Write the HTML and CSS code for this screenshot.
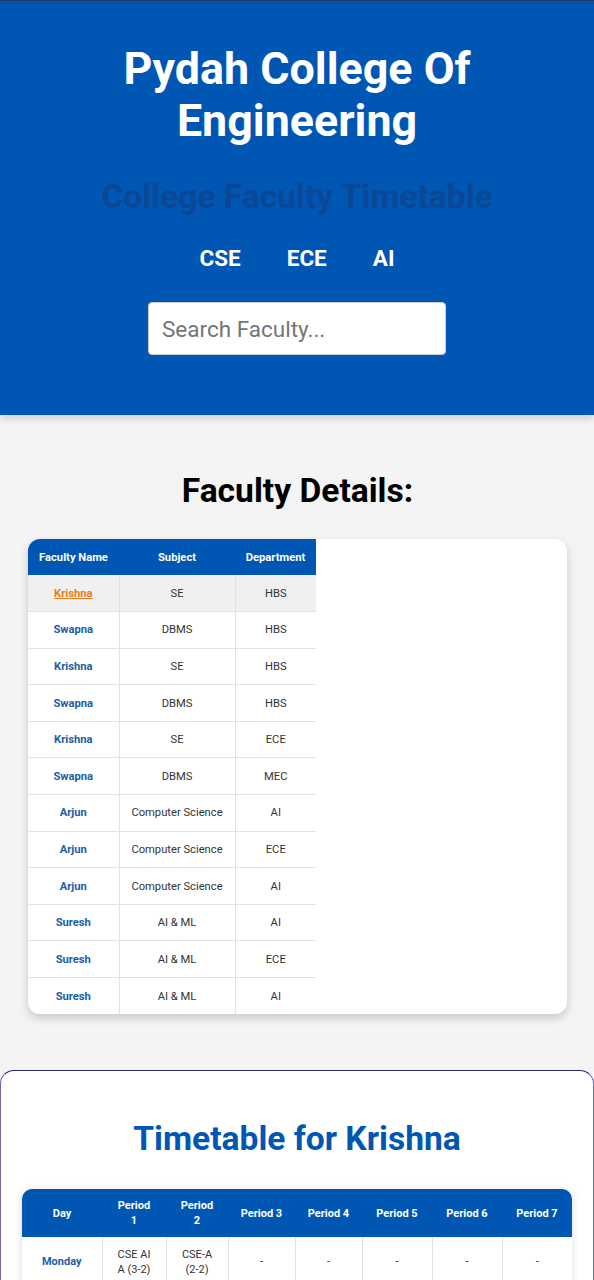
FILE: index.html
```html
<!DOCTYPE html>
<html lang="en">
<head>
<meta charset="utf-8">
<title>Pydah College Of Engineering</title>
<link rel="stylesheet" href="styles.css">
</head>
<body>
<header class="site-header">
  <h1 class="title">Pydah College Of Engineering</h1>
  <h2 class="subtitle">College Faculty Timetable</h2>
  <nav class="nav">
    <a href="#" class="nav-link">CSE</a>
    <a href="#" class="nav-link">ECE</a>
    <a href="#" class="nav-link">AI</a>
  </nav>
  <div class="search">
    <input class="search-input" type="text" placeholder="Search Faculty...">
  </div>
</header>

<main>
  <section class="faculty">
    <h2 class="section-title">Faculty Details:</h2>
    <div class="card">
      <table class="fac-table">
        <colgroup><col class="c-name"><col class="c-subj"><col class="c-dept"></colgroup>
        <thead>
          <tr><th>Faculty Name</th><th>Subject</th><th>Department</th></tr>
        </thead>
        <tbody>
          <tr class="active"><td class="name"><a href="#">Krishna</a></td><td>SE</td><td>HBS</td></tr>
          <tr><td class="name">Swapna</td><td>DBMS</td><td>HBS</td></tr>
          <tr><td class="name">Krishna</td><td>SE</td><td>HBS</td></tr>
          <tr><td class="name">Swapna</td><td>DBMS</td><td>HBS</td></tr>
          <tr><td class="name">Krishna</td><td>SE</td><td>ECE</td></tr>
          <tr><td class="name">Swapna</td><td>DBMS</td><td>MEC</td></tr>
          <tr><td class="name">Arjun</td><td>Computer Science</td><td>AI</td></tr>
          <tr><td class="name">Arjun</td><td>Computer Science</td><td>ECE</td></tr>
          <tr><td class="name">Arjun</td><td>Computer Science</td><td>AI</td></tr>
          <tr><td class="name">Suresh</td><td>AI &amp; ML</td><td>AI</td></tr>
          <tr><td class="name">Suresh</td><td>AI &amp; ML</td><td>ECE</td></tr>
          <tr><td class="name">Suresh</td><td>AI &amp; ML</td><td>AI</td></tr>
        </tbody>
      </table>
    </div>
  </section>

  <section class="timetable">
    <h2 class="tt-title">Timetable for Krishna</h2>
    <div class="tt-wrap">
      <table class="tt-table">
        <colgroup>
          <col class="t-day"><col class="t-p1"><col class="t-p2"><col class="t-p3"><col class="t-p4"><col class="t-p5"><col class="t-p6"><col class="t-p7">
        </colgroup>
        <thead>
          <tr><th>Day</th><th>Period 1</th><th>Period 2</th><th>Period 3</th><th>Period 4</th><th>Period 5</th><th>Period 6</th><th>Period 7</th></tr>
        </thead>
        <tbody>
          <tr><td class="day">Monday</td><td>CSE AI A (3-2)</td><td>CSE-A (2-2)</td><td>-</td><td>-</td><td>-</td><td>-</td><td>-</td></tr>
          <tr><td class="day">Tuesday</td><td>-</td><td>-</td><td>-</td><td>-</td><td>-</td><td>-</td><td>-</td></tr>
        </tbody>
      </table>
    </div>
  </section>
</main>
</body>
</html>
```

FILE: styles.css
```css
* { box-sizing: border-box; }

html, body {
  margin: 0;
  padding: 0;
}

body {
  background: #f4f4f4;
  font-family: Roboto, "Liberation Sans", Arial, sans-serif;
  color: #000;
}

.site-header {
  background: #0056b3;
  border-top: 1px solid #1d3b66;
  padding: 42px 20px 60px;
  text-align: center;
  box-shadow: 0 3px 8px rgba(0, 0, 0, 0.18);
  position: relative;
}

.title {
  margin: 0 auto;
  max-width: 420px;
  color: #fff;
  font-size: 44.8px;
  line-height: 52px;
  font-weight: 700;
}

.subtitle {
  margin: 30px 0 0;
  color: #0a4796;
  font-size: 33.6px;
  line-height: 40px;
  font-weight: 700;
}

.nav {
  display: flex;
  justify-content: center;
  gap: 46px;
  margin-top: 26px;
}

.nav-link {
  color: #fff;
  text-decoration: none;
  font-size: 22.5px;
  font-weight: 700;
  line-height: 30px;
}

.search {
  margin-top: 29px;
  display: flex;
  justify-content: center;
}

.search-input {
  width: 298px;
  height: 53px;
  border: 1px solid #ccc;
  border-radius: 4px;
  padding: 0 13px;
  font-family: Roboto, "Liberation Sans", Arial, sans-serif;
  font-size: 22.5px;
  color: #333;
  background: #fff;
  outline: none;
}

.search-input::placeholder {
  color: #757575;
}

.faculty {
  padding: 56px 27px 0 28px;
}

.section-title {
  margin: 0 0 28px;
  text-align: center;
  font-size: 33.6px;
  line-height: 40px;
  font-weight: 700;
  color: #000;
}

.card {
  background: #fff;
  border-radius: 12px;
  box-shadow: 0 4px 10px rgba(0, 0, 0, 0.18);
  overflow: hidden;
}

.fac-table {
  border-collapse: collapse;
  table-layout: fixed;
  width: 288px;
  font-size: 11.2px;
}

.c-name { width: 91px; }
.c-subj { width: 116px; }
.c-dept { width: 81px; }

.fac-table th {
  background: #0056b3;
  color: #fff;
  font-weight: 700;
  height: 36px;
  padding: 0 4px;
  text-align: center;
}

.fac-table td {
  height: 36.6px;
  padding: 0 4px;
  text-align: center;
  color: #333;
  border-right: 1px solid #e2e2e2;
  border-bottom: 1px solid #e2e2e2;
}

.fac-table td:last-child { border-right: none; }
.fac-table tbody tr:last-child td { border-bottom: none; }

.fac-table td.name {
  color: #1a5ea8;
  font-weight: 700;
}

.fac-table tr.active td {
  background: #f0f0f0;
}

.fac-table tr.active td.name a {
  color: #ec7a1c;
  text-decoration: underline;
}

.timetable {
  margin-top: 56px;
  background: #fff;
  border-top: 1px solid #2a2a7a;
  border-left: 1px solid #6a6ab0;
  border-right: 1px solid #6a6ab0;
  border-radius: 14px 14px 0 0;
  padding: 48px 21px 40px;
}

.tt-title {
  margin: 0 0 30px;
  text-align: center;
  color: #0056b3;
  font-size: 33.6px;
  line-height: 40px;
  font-weight: 700;
}

.tt-wrap {
  border-radius: 10px;
  overflow: hidden;
  box-shadow: 0 2px 8px rgba(0, 0, 0, 0.15);
}

.tt-table {
  border-collapse: collapse;
  table-layout: fixed;
  width: 100%;
  font-size: 11px;
}

.t-day { width: 80px; }
.t-p1 { width: 64px; }
.t-p2 { width: 62px; }
.t-p3 { width: 67px; }
.t-p4 { width: 67px; }
.t-p5 { width: 70px; }
.t-p6 { width: 70px; }
.t-p7 { width: 70px; }

.tt-table th {
  background: #0056b3;
  color: #fff;
  font-weight: 700;
  height: 48px;
  padding: 0 12px;
  line-height: 15px;
  text-align: center;
}

.tt-table td {
  height: 50px;
  padding: 0 12px;
  line-height: 15px;
  text-align: center;
  color: #333;
  border-right: 1px solid #e2e2e2;
  border-bottom: 1px solid #e2e2e2;
}

.tt-table td:last-child { border-right: none; }

.tt-table td.day {
  color: #1a5ea8;
  font-weight: 700;
}
```
